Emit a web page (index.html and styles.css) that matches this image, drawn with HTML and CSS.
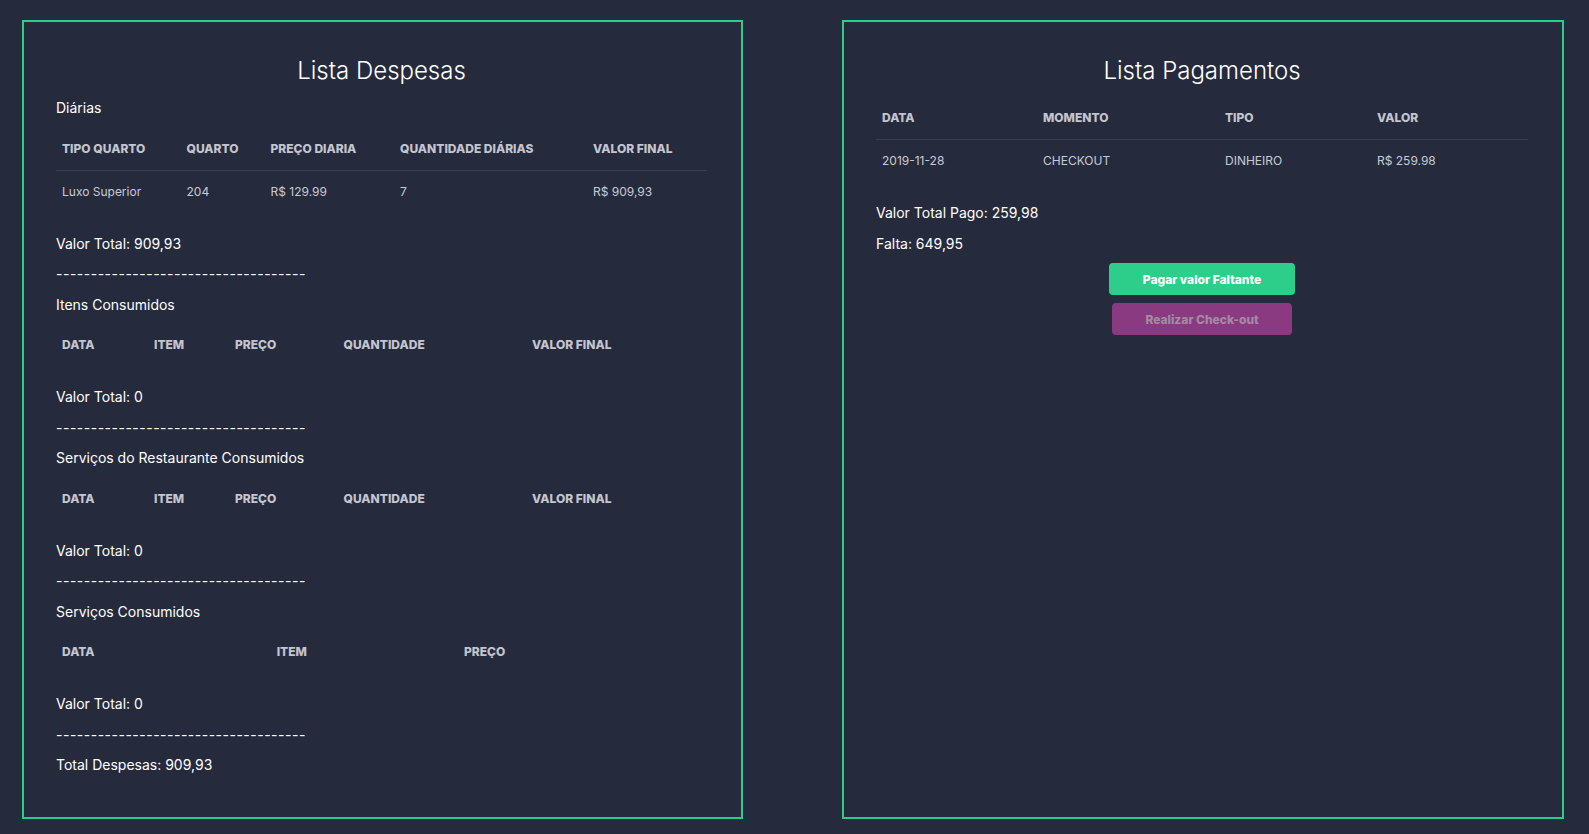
FILE: index.html
```html
<!DOCTYPE html>
<html lang="pt-BR">
<head>
<meta charset="utf-8">
<title>Despesas e Pagamentos</title>
<link rel="stylesheet" href="styles.css">
</head>
<body>
<div class="page">
  <section class="panel">
    <h3 class="panel-title">Lista Despesas</h3>
    <p class="line">Diárias</p>
    <table class="tbl">
      <colgroup>
        <col class="c-d1"><col class="c-d2"><col class="c-d3"><col class="c-d4"><col class="c-d5">
      </colgroup>
      <thead>
        <tr><th>Tipo Quarto</th><th>Quarto</th><th>Preço Diaria</th><th>Quantidade Diárias</th><th>Valor Final</th></tr>
      </thead>
      <tbody>
        <tr><td>Luxo Superior</td><td>204</td><td>R$ 129.99</td><td>7</td><td>R$ 909,93</td></tr>
      </tbody>
    </table>
    <p class="line">Valor Total: 909,93</p>
    <p class="line dashes">------------------------------------</p>

    <p class="line">Itens Consumidos</p>
    <table class="tbl">
      <colgroup>
        <col class="c-i1"><col class="c-i2"><col class="c-i3"><col class="c-i4"><col class="c-i5">
      </colgroup>
      <thead>
        <tr><th>Data</th><th>Item</th><th>Preço</th><th>Quantidade</th><th>Valor Final</th></tr>
      </thead>
      <tbody></tbody>
    </table>
    <p class="line">Valor Total: 0</p>
    <p class="line dashes">------------------------------------</p>

    <p class="line">Serviços do Restaurante Consumidos</p>
    <table class="tbl">
      <colgroup>
        <col class="c-i1"><col class="c-i2"><col class="c-i3"><col class="c-i4"><col class="c-i5">
      </colgroup>
      <thead>
        <tr><th>Data</th><th>Item</th><th>Preço</th><th>Quantidade</th><th>Valor Final</th></tr>
      </thead>
      <tbody></tbody>
    </table>
    <p class="line">Valor Total: 0</p>
    <p class="line dashes">------------------------------------</p>

    <p class="line">Serviços Consumidos</p>
    <table class="tbl">
      <colgroup>
        <col class="c-s1"><col class="c-s2"><col class="c-s3">
      </colgroup>
      <thead>
        <tr><th>Data</th><th>Item</th><th>Preço</th></tr>
      </thead>
      <tbody></tbody>
    </table>
    <p class="line">Valor Total: 0</p>
    <p class="line dashes">------------------------------------</p>
    <p class="line">Total Despesas: 909,93</p>
  </section>

  <section class="panel">
    <h3 class="panel-title">Lista Pagamentos</h3>
    <table class="tbl tbl-pay">
      <colgroup>
        <col class="c-p1"><col class="c-p2"><col class="c-p3"><col class="c-p4">
      </colgroup>
      <thead>
        <tr><th>Data</th><th>Momento</th><th>Tipo</th><th>Valor</th></tr>
      </thead>
      <tbody>
        <tr><td>2019-11-28</td><td>CHECKOUT</td><td>DINHEIRO</td><td>R$ 259.98</td></tr>
      </tbody>
    </table>
    <p class="line">Valor Total Pago: 259,98</p>
    <p class="line">Falta: 649,95</p>
    <div class="actions">
      <button class="btn btn-pay" type="button">Pagar valor Faltante</button>
      <button class="btn btn-checkout" type="button" disabled>Realizar Check-out</button>
    </div>
  </section>
</div>
</body>
</html>
```
FILE: styles.css
```css
html, body {
  margin: 0;
  padding: 0;
}

body {
  background: #262a3d;
  color: #ffffff;
  font-family: Inter, "Noto Sans", sans-serif;
  font-size: 14px;
}

.page {
  display: grid;
  grid-template-columns: 1fr 1fr;
  column-gap: 99px;
  padding: 20px 25px 15px 22px;
}

.panel {
  border: 2px solid #2ecc8a;
  padding: 34px 34px 0 32px;
  min-height: 799px;
  box-sizing: border-box;
}

.panel-title {
  margin: 0 0 12px;
  font-size: 24px;
  font-weight: 300;
  line-height: 29px;
  text-align: center;
}

.line {
  margin: 0 0 9.5px;
  line-height: 21px;
}

.dashes {
  letter-spacing: 0.5px;
}

.tbl {
  width: 100%;
  border-collapse: collapse;
  table-layout: fixed;
  margin-bottom: 20px;
}

.tbl-pay {
  margin-top: 1px;
}

.tbl th,
.tbl td {
  padding: 12px 6px;
  line-height: 18px;
  font-size: 12px;
  text-align: left;
  white-space: nowrap;
}

.tbl th {
  font-weight: 800;
  text-transform: uppercase;
  color: #c3c5cf;
}

.tbl td {
  border-top: 1px solid #3b3e51;
  color: #c9cbd4;
}

.c-d1 { width: 124.5px; }
.c-d2 { width: 84px; }
.c-d3 { width: 129.5px; }
.c-d4 { width: 193px; }
.c-d5 { width: 120px; }

.c-i1 { width: 92px; }
.c-i2 { width: 81px; }
.c-i3 { width: 108.5px; }
.c-i4 { width: 188.5px; }
.c-i5 { width: 181px; }

.c-s1 { width: 214.7px; }
.c-s2 { width: 187.3px; }
.c-s3 { width: 249px; }

.c-p1 { width: 161px; }
.c-p2 { width: 182px; }
.c-p3 { width: 152px; }
.c-p4 { width: 157px; }

.actions {
  display: flex;
  flex-direction: column;
  align-items: center;
  gap: 8px;
  margin-top: 7px;
}

.btn {
  border: 0;
  border-radius: 4px;
  font-family: Inter, "Noto Sans", sans-serif;
  font-size: 12px;
  font-weight: 800;
  padding: 0;
}

.btn-pay {
  width: 186px;
  height: 32px;
  background: #2dce89;
  color: #ffffff;
}

.btn-checkout {
  width: 180px;
  height: 32px;
  background: #893a81;
  color: #a48ba3;
}
```
